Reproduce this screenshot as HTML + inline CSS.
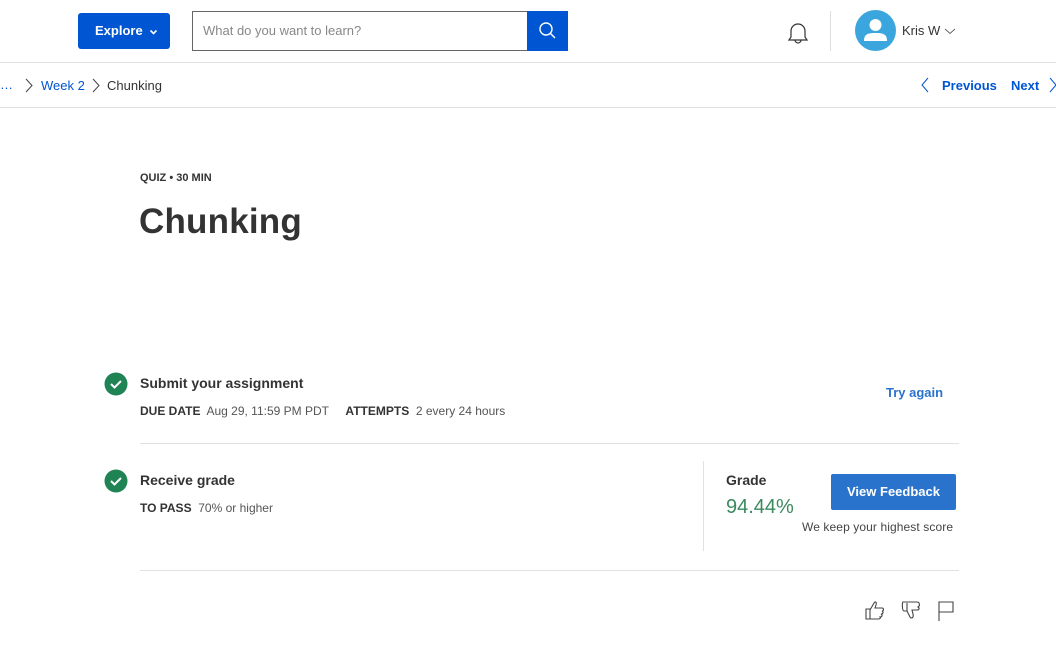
<!DOCTYPE html>
<html><head><meta charset="utf-8"><style>
*{margin:0;padding:0;box-sizing:border-box}
body{width:1056px;height:648px;background:#fff;font-family:"Liberation Sans",sans-serif;color:#333;position:relative;overflow:hidden}
.a{position:absolute;white-space:nowrap}
.hr{position:absolute;height:1px;background:#e1e1e1}
</style></head><body>
<div class="a" style="left:78px;top:13px;width:92px;height:36px;background:#0056d2;border-radius:3px;color:#fff;font-weight:bold;font-size:13px;line-height:36px;padding-left:17px">Explore <svg width="9" height="6" style="margin-left:3px" viewBox="0 0 9 6"><path d="M1.5 1.5 L4.5 4.5 L7.5 1.5" stroke="#fff" stroke-width="1.6" fill="none"/></svg></div>
<div class="a" style="left:192px;top:11px;width:336px;height:40px;border:1px solid #666;border-right:none;font-size:13px;color:#888;line-height:38px;padding-left:10px">What do you want to learn?</div>
<div class="a" style="left:527px;top:11px;width:41px;height:40px;background:#0056d2"><svg width="41" height="40" viewBox="0 0 41 40"><circle cx="19" cy="18" r="6" stroke="#fff" stroke-width="1.4" fill="none"/><path d="M23.5 22.5 L28 27" stroke="#fff" stroke-width="1.4"/></svg></div>
<svg class="a" style="left:785px;top:19px" width="26" height="28" viewBox="0 0 26 28"><path d="M4 21 L6 18 V12 A7 7 0 0 1 20 12 V18 L22 21 Z M10 21 A3 3 0 0 0 16 21" stroke="#333" stroke-width="1.2" fill="none"/></svg>
<div class="a" style="left:830px;top:11px;width:1px;height:40px;background:#ddd"></div>
<svg class="a" style="left:855px;top:10px" width="41" height="41" viewBox="0 0 41 41"><circle cx="20.5" cy="20.5" r="20.5" fill="#3aa6dd"/><circle cx="20.5" cy="15" r="6" fill="#fff"/><path d="M9 31 C9 24 13 23 20.5 23 C28 23 32 24 32 31 Z" fill="#fff"/></svg>
<div class="a" style="left:902px;top:23px;font-size:13px;color:#333">Kris W</div>
<svg class="a" style="left:944px;top:28px" width="12" height="7" viewBox="0 0 12 7"><path d="M1 1 L6 5.5 L11 1" stroke="#666" stroke-width="1" fill="none"/></svg>
<div class="hr" style="left:0;top:62px;width:1056px"></div>
<div class="a" style="left:0;top:77px;font-size:13px;color:#0056d2">…</div>
<svg class="a" style="left:24px;top:78px" width="10" height="15" viewBox="0 0 10 15"><path d="M2 1 L8 7.5 L2 14" stroke="#444" fill="none"/></svg>
<div class="a" style="left:41px;top:78px;font-size:13px;color:#0056d2">Week 2</div>
<svg class="a" style="left:91px;top:78px" width="10" height="15" viewBox="0 0 10 15"><path d="M2 1 L8 7.5 L2 14" stroke="#444" fill="none"/></svg>
<div class="a" style="left:107px;top:78px;font-size:13px;color:#333">Chunking</div>
<svg class="a" style="left:920px;top:77px" width="10" height="16" viewBox="0 0 10 16"><path d="M8 1 L2 8 L8 15" stroke="#0056d2" fill="none"/></svg>
<div class="a" style="left:942px;top:78px;font-size:13px;font-weight:bold;color:#0056d2">Previous</div>
<div class="a" style="left:1011px;top:78px;font-size:13px;font-weight:bold;color:#0056d2">Next</div>
<svg class="a" style="left:1048px;top:77px" width="10" height="16" viewBox="0 0 10 16"><path d="M2 1 L8 8 L2 15" stroke="#0056d2" fill="none"/></svg>
<div class="hr" style="left:0;top:107px;width:1056px"></div>
<div class="a" style="left:140px;top:172px;font-size:11px;font-weight:bold;color:#333">QUIZ • 30 MIN</div>
<div class="a" style="left:139px;top:202px;font-size:35px;font-weight:bold;color:#333;letter-spacing:0.2px">Chunking</div>
<svg class="a" style="left:104px;top:372px" width="24" height="24" viewBox="0 0 24 24"><circle cx="12" cy="12" r="11.5" fill="#1f8354"/><path d="M7 12 L10.5 15.5 L17 9" stroke="#fff" stroke-width="2" fill="none"/></svg>
<div class="a" style="left:140px;top:375px;font-size:14px;font-weight:bold;color:#333">Submit your assignment</div>
<div class="a" style="left:140px;top:404px;font-size:12px;color:#555"><b style="color:#333">DUE DATE</b>&nbsp; Aug 29, 11:59 PM PDT &nbsp; &nbsp; <b style="color:#333">ATTEMPTS</b>&nbsp; 2 every 24 hours</div>
<div class="a" style="left:886px;top:385px;font-size:13px;font-weight:bold;color:#2a73cc">Try again</div>
<div class="hr" style="left:140px;top:443px;width:819px"></div>
<svg class="a" style="left:104px;top:469px" width="24" height="24" viewBox="0 0 24 24"><circle cx="12" cy="12" r="11.5" fill="#1f8354"/><path d="M7 12 L10.5 15.5 L17 9" stroke="#fff" stroke-width="2" fill="none"/></svg>
<div class="a" style="left:140px;top:472px;font-size:14px;font-weight:bold;color:#333">Receive grade</div>
<div class="a" style="left:140px;top:501px;font-size:12px;color:#555"><b style="color:#333">TO PASS</b>&nbsp; 70% or higher</div>
<div class="a" style="left:703px;top:461px;width:1px;height:90px;background:#e1e1e1"></div>
<div class="a" style="left:726px;top:472px;font-size:14px;font-weight:bold;color:#333">Grade</div>
<div class="a" style="left:726px;top:496px;font-size:20px;color:#3a8a5e">94.44%</div>
<div class="a" style="left:831px;top:474px;width:125px;height:36px;background:#2a73cc;border-radius:2px;color:#fff;font-size:13px;font-weight:bold;text-align:center;line-height:36px">View Feedback</div>
<div class="a" style="left:802px;top:520px;font-size:12px;color:#444;letter-spacing:0.1px">We keep your highest score</div>
<div class="hr" style="left:140px;top:570px;width:819px"></div>
<svg class="a" style="left:864px;top:599px" width="22" height="22" viewBox="0 0 22 22"><path d="M2 10 H6 V20 H2 Z M6 11 L10 4 C11 2 13 3 12 6 L11 9 H18 C20 9 20 12 18 12 C20 13 19 15 17 15 C19 16 18 18 16 18 C17 19 16 20 14 20 H6" stroke="#444" stroke-width="1.1" fill="none"/></svg>
<svg class="a" style="left:900px;top:599px" width="22" height="24" viewBox="0 0 22 24"><path d="M3 3 H17 C20 3 20 7 18 8 C20 9 19 11 17 11 H12 L13 15 C14 19 11 20 10 18 L7 12 H4 C2 12 2 3 3 3 Z M7 12 V4" stroke="#444" stroke-width="1.1" fill="none"/></svg>
<svg class="a" style="left:936px;top:600px" width="20" height="22" viewBox="0 0 20 22"><path d="M3 21 V2 H17 V12 H3" stroke="#444" stroke-width="1.1" fill="none"/></svg>
</body></html>
